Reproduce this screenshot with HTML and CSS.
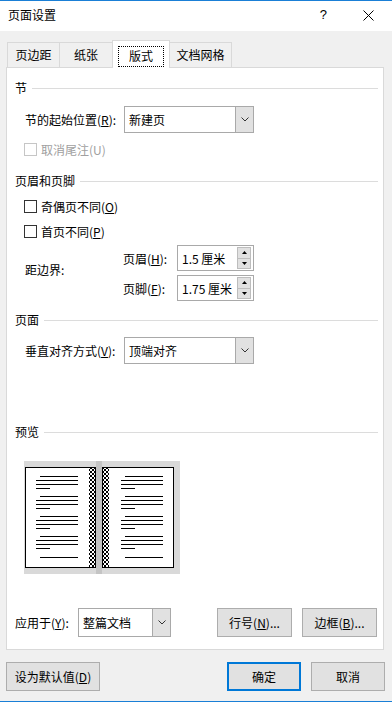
FILE: index.html
```html
<!DOCTYPE html>
<html lang="zh-CN">
<head>
  <meta charset="UTF-8">
  <title>页面设置</title>
  <link rel="stylesheet" href="styles.css">
</head>
<body>
  <div class="dialog">
    <div class="titlebar">
      <span class="title">页面设置</span>
      <span class="help">?</span>
      <svg class="close" width="11" height="11" viewBox="0 0 11 11">
        <path d="M0.5 0.5 L10.5 10.5 M10.5 0.5 L0.5 10.5" stroke="#000" stroke-width="1"/>
      </svg>
    </div>
    <div class="body">
      <div class="tabs">
        <div class="tab t1">页边距</div>
        <div class="tab t2">纸张</div>
        <div class="tab t3 active"><span class="focus">版式</span></div>
        <div class="tab t4">文档网格</div>
      </div>
      <div class="panel">
        <div class="heading h-section">节</div>
        <div class="field f-start">
          <span class="field-label">节的起始位置(<u>R</u>):</span>
          <div class="combo">
            <span class="combo-text">新建页</span>
            <span class="combo-btn"><svg width="8" height="5" viewBox="0 0 8 5"><path d="M0.5 0.5 L4 4 L7.5 0.5" fill="none" stroke="#333"/></svg></span>
          </div>
        </div>
        <div class="check disabled c-endnote"><span class="box"></span>取消尾注(U)</div>

        <div class="heading h-header">页眉和页脚</div>
        <div class="check c-odd"><span class="box"></span>奇偶页不同(<u>O</u>)</div>
        <div class="check c-first"><span class="box"></span>首页不同(<u>P</u>)</div>
        <div class="margins">
          <span class="margins-label">距边界:</span>
          <div class="spin-rows">
            <div class="spin-row">
              <span class="spin-label">页眉(<u>H</u>):</span>
              <div class="spin">
                <span class="spin-text">1.5 厘米</span>
                <span class="spin-btns">
                  <span class="spin-btn"><svg width="5" height="3" viewBox="0 0 5 3"><path d="M0 3 L2.5 0 L5 3 Z" fill="#000"/></svg></span>
                  <span class="spin-btn"><svg width="5" height="3" viewBox="0 0 5 3"><path d="M0 0 L2.5 3 L5 0 Z" fill="#000"/></svg></span>
                </span>
              </div>
            </div>
            <div class="spin-row">
              <span class="spin-label">页脚(<u>F</u>):</span>
              <div class="spin">
                <span class="spin-text">1.75 厘米</span>
                <span class="spin-btns">
                  <span class="spin-btn"><svg width="5" height="3" viewBox="0 0 5 3"><path d="M0 3 L2.5 0 L5 3 Z" fill="#000"/></svg></span>
                  <span class="spin-btn"><svg width="5" height="3" viewBox="0 0 5 3"><path d="M0 0 L2.5 3 L5 0 Z" fill="#000"/></svg></span>
                </span>
              </div>
            </div>
          </div>
        </div>

        <div class="heading h-page">页面</div>
        <div class="field f-valign">
          <span class="field-label">垂直对齐方式(<u>V</u>):</span>
          <div class="combo">
            <span class="combo-text">顶端对齐</span>
            <span class="combo-btn"><svg width="8" height="5" viewBox="0 0 8 5"><path d="M0.5 0.5 L4 4 L7.5 0.5" fill="none" stroke="#333"/></svg></span>
          </div>
        </div>

        <div class="heading h-preview">预览</div>
        <svg class="preview" width="156" height="113" viewBox="0 0 156 113">
          <defs>
            <pattern id="checker" width="4" height="4" patternUnits="userSpaceOnUse">
              <rect width="4" height="4" fill="#fff"/>
              <rect width="2" height="2" fill="#000"/>
              <rect x="2" y="2" width="2" height="2" fill="#000"/>
            </pattern>
          </defs>
          <rect width="156" height="113" fill="#d9d9d9"/>
          <rect x="72" y="0" width="6" height="113" fill="#c4c4c4"/>
          <rect x="1.5" y="6.5" width="70" height="100" fill="#fff" stroke="#000"/>
          <rect x="65" y="7" width="6" height="99" fill="url(#checker)"/>
          <rect x="78.5" y="6.5" width="71" height="100" fill="#fff" stroke="#000"/>
          <rect x="79" y="7" width="6" height="99" fill="url(#checker)"/>
          <g stroke="#000" stroke-width="1">
            <path d="M16 15.5H54 M12 19.5H54 M12 23.5H54 M12 27.5H26
                     M16 35.5H54 M12 39.5H54 M12 43.5H54 M12 47.5H26
                     M16 55.5H54 M12 59.5H54 M12 63.5H54 M12 67.5H26
                     M16 75.5H54 M12 79.5H54 M12 83.5H54 M12 87.5H26
                     M16 96.5H54"/>
            <path d="M101 15.5H139 M97 19.5H139 M97 23.5H139 M97 27.5H111
                     M101 35.5H139 M97 39.5H139 M97 43.5H139 M97 47.5H111
                     M101 55.5H139 M97 59.5H139 M97 63.5H139 M97 67.5H111
                     M101 75.5H139 M97 79.5H139 M97 83.5H139 M97 87.5H111
                     M101 96.5H139"/>
          </g>
        </svg>

        <div class="apply">
          <span class="apply-label">应用于(<u>Y</u>):</span>
          <div class="combo combo-small">
            <span class="combo-text">整篇文档</span>
            <span class="combo-btn"><svg width="8" height="5" viewBox="0 0 8 5"><path d="M0.5 0.5 L4 4 L7.5 0.5" fill="none" stroke="#333"/></svg></span>
          </div>
          <div class="apply-buttons">
            <button class="btn btn-small">行号(<u>N</u>)...</button>
            <button class="btn btn-small">边框(<u>B</u>)...</button>
          </div>
        </div>
      </div>
      <div class="footer">
        <button class="btn btn-default">设为默认值(<u>D</u>)</button>
        <button class="btn btn-ok">确定</button>
        <button class="btn btn-cancel">取消</button>
      </div>
    </div>
  </div>
</body>
</html>
```

FILE: styles.css
```css
body {
  margin: 0;
  font-family: "Noto Sans CJK SC", "Microsoft YaHei", sans-serif;
  font-size: 12px;
  color: #000;
}
.dialog {
  width: 392px;
  height: 702px;
  box-sizing: border-box;
  border-top: 1px solid #1a7fd6;
  border-bottom: 1px solid #1a7fd6;
  background: #f0f0f0;
  overflow: hidden;
}
.titlebar {
  height: 30px;
  background: #fff;
  display: flex;
  align-items: center;
  padding-left: 8px;
  line-height: 16px;
}
.title {
  margin-top: -2px;
}
.help {
  margin-left: auto;
  font-family: "Liberation Sans", sans-serif;
  font-size: 13px;
  margin-top: -2px;
}
.close {
  margin-left: 36px;
  margin-right: 18px;
  margin-top: -2px;
}
.body {
  padding: 9px 7px 0 6px;
}
.tabs {
  display: flex;
  align-items: flex-end;
  height: 27px;
  margin-left: 1px;
}
.tab {
  height: 25px;
  box-sizing: border-box;
  border: 1px solid #d9d9d9;
  border-bottom: none;
  margin-right: -1px;
  display: flex;
  align-items: center;
  justify-content: center;
  line-height: 16px;
}
.t1 { width: 53px; }
.t2 { width: 54px; }
.t3 { width: 58px; }
.t4 { width: 63px; }
.tab.active {
  height: 28px;
  background: #fff;
  margin-bottom: -1px;
  position: relative;
  padding-top: 3px;
}
.focus {
  width: 46px;
  height: 21px;
  box-sizing: border-box;
  border: 1px dotted #000;
  display: flex;
  align-items: center;
  justify-content: center;
}
.panel {
  width: 378px;
  height: 583px;
  box-sizing: border-box;
  border: 1px solid #d9d9d9;
  background: #fff;
  padding: 0 5px 0 8px;
}
.heading {
  display: flex;
  align-items: center;
  height: 16px;
  line-height: 16px;
}
.heading::after {
  content: "";
  flex: 1;
  height: 1px;
  background: #dcdcdc;
  margin-left: 5px;
}
.h-section { margin-top: 12px; }
.h-header { margin-top: 16px; }
.h-page { margin-top: 11px; }
.h-preview { margin-top: 60px; }

.field {
  display: flex;
  align-items: center;
  padding-left: 10px;
  height: 27px;
}
.f-start { margin-top: 10px; }
.f-valign { margin-top: 9px; }
.field-label {
  width: 99px;
}
.combo {
  width: 130px;
  height: 27px;
  box-sizing: border-box;
  border: 1px solid #a9a9a9;
  display: flex;
  background: #fff;
}
.combo-text {
  flex: 1;
  padding-left: 4px;
  display: flex;
  align-items: center;
}
.combo-btn {
  width: 17px;
  background: #e1e1e1;
  border-left: 1px solid #a9a9a9;
  display: flex;
  align-items: center;
  justify-content: center;
}
.check {
  display: flex;
  align-items: center;
  height: 16px;
  padding-left: 9px;
}
.check .box {
  width: 13px;
  height: 13px;
  box-sizing: border-box;
  border: 1px solid #333;
  background: #fff;
  margin-right: 4px;
}
.check.disabled {
  color: #a0a0a0;
}
.check.disabled .box {
  border-color: #c6c6c6;
}
.c-endnote { margin-top: 8px; }
.c-odd { margin-top: 9px; }
.c-first { margin-top: 9px; }

.margins {
  display: flex;
  align-items: center;
  padding-left: 10px;
  margin-top: 6px;
}
.margins-label {
  width: 98px;
  margin-bottom: 8px;
}
.spin-rows {
  display: flex;
  flex-direction: column;
  gap: 4px;
}
.spin-row {
  display: flex;
  align-items: center;
}
.spin-label {
  width: 54px;
}
.spin {
  width: 77px;
  height: 26px;
  box-sizing: border-box;
  border: 1px solid #a9a9a9;
  display: flex;
  background: #fff;
}
.spin-text {
  flex: 1;
  padding-left: 4px;
  display: flex;
  align-items: center;
}
.spin-btns {
  width: 14px;
  margin: 1px 2px 1px 0;
  display: flex;
  flex-direction: column;
  gap: 0;
}
.spin-btn {
  flex: 1;
  background: #e1e1e1;
  border: 1px solid #bdbdbd;
  display: flex;
  align-items: center;
  justify-content: center;
}
.spin-btn + .spin-btn {
  border-top: none;
}

.preview {
  display: block;
  margin: 21px 0 0 9px;
}

.apply {
  display: flex;
  align-items: center;
  margin-top: 34px;
  height: 29px;
}
.apply-label {
  width: 63px;
}
.combo-small {
  width: 93px;
  height: 29px;
}
.apply-buttons {
  margin-left: auto;
  margin-right: 1px;
  display: flex;
  gap: 10px;
}
.btn {
  font-family: inherit;
  font-size: 12px;
  color: #000;
  height: 29px;
  box-sizing: border-box;
  border: 1px solid #adadad;
  background: #e1e1e1;
  padding: 0;
}
.btn-small {
  width: 75px;
}
.footer {
  display: flex;
  margin-top: 12px;
}
.btn-default {
  width: 94px;
}
.btn-ok {
  width: 74px;
  margin-left: auto;
  border: 2px solid #0078d7;
}
.btn-cancel {
  width: 74px;
  margin-left: 10px;
}
```
